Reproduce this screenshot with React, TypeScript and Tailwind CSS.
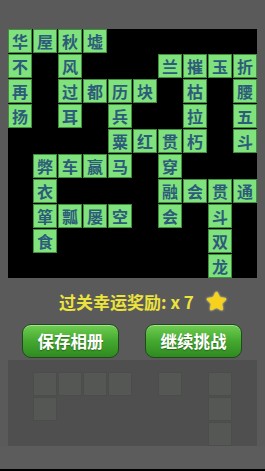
import { FaStar } from "react-icons/fa";

type Tile = { r: number; c: number; t: string };

const tiles: Tile[] = [
  { r: 0, c: 0, t: "华" }, { r: 0, c: 1, t: "屋" }, { r: 0, c: 2, t: "秋" }, { r: 0, c: 3, t: "墟" },
  { r: 1, c: 0, t: "不" }, { r: 1, c: 2, t: "风" }, { r: 1, c: 6, t: "兰" }, { r: 1, c: 7, t: "摧" }, { r: 1, c: 8, t: "玉" }, { r: 1, c: 9, t: "折" },
  { r: 2, c: 0, t: "再" }, { r: 2, c: 2, t: "过" }, { r: 2, c: 3, t: "都" }, { r: 2, c: 4, t: "历" }, { r: 2, c: 5, t: "块" }, { r: 2, c: 7, t: "枯" }, { r: 2, c: 9, t: "腰" },
  { r: 3, c: 0, t: "扬" }, { r: 3, c: 2, t: "耳" }, { r: 3, c: 4, t: "兵" }, { r: 3, c: 7, t: "拉" }, { r: 3, c: 9, t: "五" },
  { r: 4, c: 4, t: "粟" }, { r: 4, c: 5, t: "红" }, { r: 4, c: 6, t: "贯" }, { r: 4, c: 7, t: "朽" }, { r: 4, c: 9, t: "斗" },
  { r: 5, c: 1, t: "弊" }, { r: 5, c: 2, t: "车" }, { r: 5, c: 3, t: "赢" }, { r: 5, c: 4, t: "马" }, { r: 5, c: 6, t: "穿" },
  { r: 6, c: 1, t: "衣" }, { r: 6, c: 6, t: "融" }, { r: 6, c: 7, t: "会" }, { r: 6, c: 8, t: "贯" }, { r: 6, c: 9, t: "通" },
  { r: 7, c: 1, t: "箪" }, { r: 7, c: 2, t: "瓢" }, { r: 7, c: 3, t: "屡" }, { r: 7, c: 4, t: "空" }, { r: 7, c: 6, t: "会" }, { r: 7, c: 8, t: "斗" },
  { r: 8, c: 1, t: "食" }, { r: 8, c: 8, t: "双" },
  { r: 9, c: 8, t: "龙" },
];

// faint ghost of the board behind the bottom area
const ghost = [
  { r: 0, c: 1 }, { r: 0, c: 2 }, { r: 0, c: 3 }, { r: 0, c: 4 }, { r: 0, c: 6 }, { r: 0, c: 8 },
  { r: 1, c: 1 }, { r: 1, c: 8 },
  { r: 2, c: 8 },
];

const cjk = { fontFamily: '"Noto Sans CJK SC", "Noto Sans", sans-serif' };

const Board = () => (
  <div className="w-[249px] h-[249px] bg-black grid grid-cols-[repeat(10,24px)] grid-rows-[repeat(10,24px)] gap-[1px]">
    {tiles.map((x, i) => (
      <div
        key={i}
        style={{ gridRow: x.r + 1, gridColumn: x.c + 1 }}
        className="bg-[#80e27c] border border-[#3f8f3c] flex items-center justify-center text-[16px] font-bold text-[#2d5c7a] leading-none"
      >
        {x.t}
      </div>
    ))}
  </div>
);

const Button = ({ label }: { label: string }) => (
  <button className="w-[97px] h-[34px] rounded-[9px] border border-[#1f4a1a] bg-gradient-to-b from-[#6fce52] via-[#45a82f] to-[#2f8a20] text-white text-[16.5px] font-bold shadow-[inset_0_1px_0_rgba(255,255,255,0.4)] [text-shadow:0_1px_1px_rgba(0,0,0,0.35)]">
    {label}
  </button>
);

export default function App() {
  return (
    <div className="w-[265px] h-[471px] bg-[#5a5a5a] flex flex-col overflow-hidden" style={cjk}>
      <div className="pt-[29px] pl-[8px]">
        <Board />
      </div>

      <div className="mt-[13px] h-[20px] flex items-center justify-center gap-[12px] pl-[21px]">
        <span className="text-[17px] font-bold text-[#ece33c] leading-none">过关幸运奖励: x 7</span>
        <FaStar className="text-[#f7d21c] w-[21px] h-[20px] drop-shadow-[0_0_1px_#fff8a0]" />
      </div>

      <div className="mt-[13px] flex justify-between pl-[22px] pr-[23px]">
        <Button label="保存相册" />
        <Button label="继续挑战" />
      </div>

      <div className="mt-[2px] ml-[8px] w-[249px] h-[86px] bg-[#4f4f4f] pt-[12px] grid grid-cols-[repeat(10,24px)] grid-rows-[repeat(3,24px)] gap-[1px] content-start">
        {ghost.map((g, i) => (
          <div
            key={i}
            style={{ gridRow: g.r + 1, gridColumn: g.c + 1 }}
            className="bg-[#555754] border border-[#4c4c4c]"
          />
        ))}
      </div>

      <div className="flex-1 bg-[#5c5c5c]" />
      <div className="h-[2px] bg-black" />
    </div>
  );
}
